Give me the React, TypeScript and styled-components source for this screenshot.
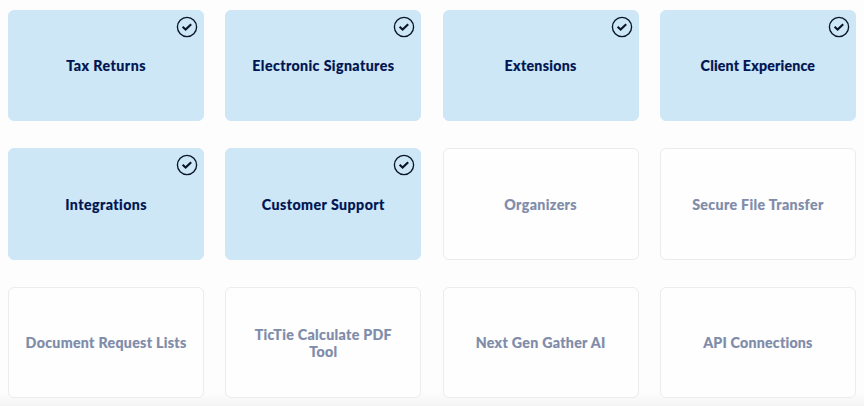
import React from "react";
import styled, { createGlobalStyle } from "styled-components";

const GlobalStyle = createGlobalStyle`
  * { box-sizing: border-box; }
  body { margin: 0; background: #fdfdfd; }
`;

const Page = styled.main`
  height: 406px;
  overflow: hidden;
  padding: 9.7px 8.2px 0;
  background: linear-gradient(to bottom, #fdfdfd 0, #fdfdfd 392px, #f4f4f4 406px);
  font-family: Lato, "Open Sans", sans-serif;
`;

const FeatureGrid = styled.section`
  display: grid;
  grid-template-columns: repeat(4, 195.8px);
  justify-content: space-between;
  grid-auto-rows: 111.6px;
  row-gap: 26.9px;
`;

const Card = styled.div<{ $selected: boolean }>`
  position: relative;
  display: flex;
  align-items: center;
  justify-content: center;
  padding: 1px 8px 0;
  border: 1px solid ${(p) => (p.$selected ? "#cee7f6" : "#ececee")};
  border-radius: 6px;
  background: ${(p) => (p.$selected ? "#cee7f6" : "#fefefe")};
  color: ${(p) => (p.$selected ? "#001551" : "#7f8caa")};
`;

const Label = styled.span<{ $tracking: number }>`
  font-size: 14.2px;
  font-weight: 900;
  line-height: 17px;
  letter-spacing: ${(p) => p.$tracking}px;
  -webkit-text-stroke: 0.15px currentColor;
  text-align: center;
  white-space: pre-line;
`;

const Badge = styled.svg`
  position: absolute;
  top: 5px;
  right: 5px;
  width: 22px;
  height: 22px;
  fill: none;
  stroke: #071527;
`;

type Feature = { name: string; selected?: boolean; tracking: number };

const features: Feature[] = [
  { name: "Tax Returns", selected: true, tracking: 0.47 },
  { name: "Electronic Signatures", selected: true, tracking: 0.4 },
  { name: "Extensions", selected: true, tracking: 0.29 },
  { name: "Client Experience", selected: true, tracking: 0.19 },
  { name: "Integrations", selected: true, tracking: 0.43 },
  { name: "Customer Support", selected: true, tracking: 0.45 },
  { name: "Organizers", tracking: 0.39 },
  { name: "Secure File Transfer", tracking: 0.36 },
  { name: "Document Request Lists", tracking: 0.31 },
  { name: "TicTie Calculate PDF\nTool", tracking: 0.33 },
  { name: "Next Gen Gather AI", tracking: 0.3 },
  { name: "API Connections", tracking: 0.23 },
];

const CheckBadge = () => (
  <Badge viewBox="0 0 22 22" aria-hidden="true">
    <circle cx="11" cy="11" r="9.6" strokeWidth="1.35" />
    <path d="M6.6 10.8 9.6 13.5 15.2 8.2" strokeWidth="2.1" />
  </Badge>
);

export default function App() {
  return (
    <>
      <GlobalStyle />
      <Page>
        <FeatureGrid>
          {features.map(({ name, selected = false, tracking }) => (
            <Card key={name} $selected={selected}>
              <Label $tracking={tracking}>{name}</Label>
              {selected && <CheckBadge />}
            </Card>
          ))}
        </FeatureGrid>
      </Page>
    </>
  );
}
